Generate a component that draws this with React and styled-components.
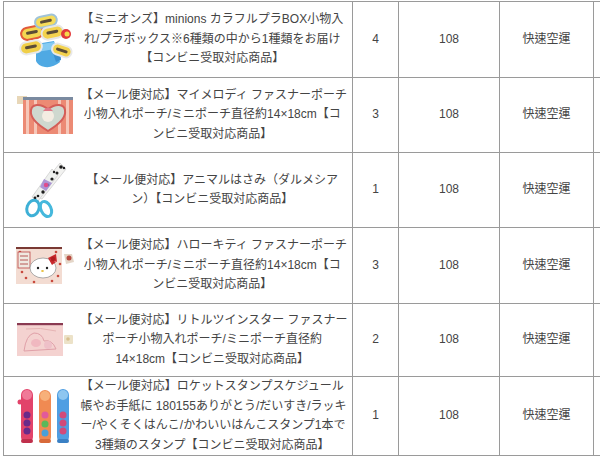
import React from 'react';
import styled, { createGlobalStyle } from 'styled-components';

const GlobalStyle = createGlobalStyle`
  html, body {
    margin: 0;
    padding: 0;
    background: #ffffff;
    overflow: hidden;
  }
`;

const Page = styled.div`
  width: 600px;
  height: 465px;
  overflow: hidden;
  padding: 1px 0 0 3px;
  box-sizing: border-box;
  background: #fff;
`;

const Table = styled.table`
  border-collapse: collapse;
  table-layout: fixed;
  width: 640px;
  font-family: "Liberation Sans", "Noto Sans CJK TC", "Noto Sans CJK JP", sans-serif;
  font-size: 12px;
  color: #444444;
`;

const Col = styled.col`
  width: ${props => props.$w}px;
`;

const Row = styled.tr`
  height: ${props => props.$h}px;
`;

const Cell = styled.td`
  border: 1px solid #9a9a9a;
  padding: 0;
  text-align: center;
  vertical-align: middle;
  line-height: 19.5px;
`;

const PicCell = styled(Cell)`
  border-right: none;
`;

const NameCell = styled(Cell)`
  border-left: none;
  padding: 0 8px 0 0;
`;

const Line = styled.div`
  white-space: nowrap;
`;

const Pic = styled.div`
  display: flex;
  align-items: center;
  justify-content: center;
  padding-left: 8px;
`;

const MinionsBox = () => (
  <svg width="60" height="56" viewBox="0 0 60 56">
    <path d="M20 32 L38 29 L44 50 Q37 56 29 55 Q22 54 20 49 Z" fill="#4fa9e3" />
    <path d="M20 33 L38 30 L39 37 L21 40 Z" fill="#86cbf2" />
    <path d="M36 38 L44 36 L45 48 L40 50 Z" fill="#3b8fcf" />
    <g transform="rotate(-12 30 24)">
      <rect x="6" y="12" width="22" height="12" rx="6" fill="#f3d652" stroke="#e25a3a" strokeWidth="2" />
      <rect x="22" y="4" width="22" height="11" rx="5.5" fill="#f6dc5a" stroke="#9fc3d8" strokeWidth="2" />
      <rect x="26" y="16" width="22" height="12" rx="6" fill="#f3d24e" stroke="#e6e6e6" strokeWidth="2" />
      <rect x="2" y="26" width="22" height="12" rx="6" fill="#f0cf48" stroke="#e9e9e9" strokeWidth="2" />
      <g fill="#5a4c36">
        <rect x="11" y="16" width="12" height="3" rx="1.5" />
        <rect x="27" y="8" width="12" height="3" rx="1.5" />
        <rect x="31" y="20" width="12" height="3" rx="1.5" />
        <rect x="7" y="30" width="12" height="3" rx="1.5" />
      </g>
    </g>
    <g transform="rotate(18 46 38)">
      <rect x="36" y="33" width="20" height="11" rx="5.5" fill="#f2d24e" stroke="#e8e8e8" strokeWidth="2" />
      <rect x="40" y="37" width="12" height="3" rx="1.5" fill="#5a4c36" />
    </g>
    <circle cx="50" cy="22" r="5" fill="#e2383a" />
    <circle cx="51" cy="22" r="2.5" fill="#f6d84a" />
  </svg>
);

const MelodyPouch = () => (
  <svg width="58" height="42" viewBox="0 0 58 42">
    <rect x="0" y="2" width="10" height="8" fill="#e8d7b8" />
    <rect x="6" y="4" width="50" height="36" fill="#ec8a74" />
    <g fill="#f6c7b8">
      <rect x="9" y="4" width="3" height="36" />
      <rect x="17" y="4" width="3" height="36" />
      <rect x="41" y="4" width="3" height="36" />
      <rect x="49" y="4" width="3" height="36" />
    </g>
    <rect x="6" y="3" width="50" height="3" fill="#7a8aa0" />
    <path d="M31 37 C18 29 13 23 14 16 C15 10 23 9 31 15 C39 9 47 10 48 16 C49 23 44 29 31 37 Z" fill="#cfd8cf" stroke="#d45e58" strokeWidth="2" />
    <circle cx="31" cy="22" r="6" fill="#f4ece2" />
    <path d="M26 17 Q31 10 36 17 Z" fill="#e07888" />
  </svg>
);

const DalmatianScissors = () => (
  <svg width="44" height="58" viewBox="0 0 44 58">
    <path d="M36 2 L42 8 L18 38 L10 34 Z" fill="#f2f2f0" stroke="#cfcfcf" strokeWidth="0.8" />
    <path d="M28 8 L34 14 L14 40 L8 36 Z" fill="#eef0ee" stroke="#cfcfcf" strokeWidth="0.8" />
    <g fill="#1e1e1e">
      <circle cx="37" cy="6" r="1.8" />
      <circle cx="33" cy="12" r="1.5" />
      <circle cx="28" cy="18" r="1.6" />
      <circle cx="24" cy="24" r="1.4" />
      <circle cx="19" cy="31" r="1.7" />
      <circle cx="14" cy="35" r="1.3" />
      <circle cx="30" cy="11" r="1.2" />
      <circle cx="11" cy="37" r="1.4" />
      <circle cx="40" cy="7" r="1.2" />
    </g>
    <path d="M20 18 L28 22 L22 30 L16 26 Z" fill="#9b7ed0" opacity="0.8" />
    <circle cx="22" cy="24" r="2.2" fill="#e04c8c" />
    <ellipse cx="9" cy="47" rx="6" ry="8" fill="none" stroke="#3eb0d6" strokeWidth="3" transform="rotate(20 9 47)" />
    <ellipse cx="22" cy="48" rx="5" ry="8" fill="none" stroke="#45b8dc" strokeWidth="3" transform="rotate(-25 22 48)" />
  </svg>
);

const KittyPouch = () => (
  <svg width="60" height="40" viewBox="0 0 60 40">
    <rect x="0" y="2" width="46" height="36" fill="#f3dcd2" />
    <g fill="#c84a3e">
      <circle cx="4" cy="6" r="1.3" /><circle cx="10" cy="32" r="1.3" /><circle cx="40" cy="6" r="1.3" />
      <circle cx="42" cy="30" r="1.3" /><circle cx="6" cy="26" r="1.3" /><circle cx="36" cy="35" r="1.3" />
      <circle cx="44" cy="18" r="1.3" /><circle cx="18" cy="36" r="1.3" />
    </g>
    <rect x="2" y="6" width="12" height="16" fill="#efe8e0" stroke="#b44" strokeWidth="0.8" />
    <g stroke="#a33" strokeWidth="0.8">
      <line x1="4" y1="10" x2="12" y2="10" /><line x1="4" y1="14" x2="12" y2="14" /><line x1="4" y1="18" x2="12" y2="18" />
    </g>
    <ellipse cx="27" cy="22" rx="13" ry="10" fill="#ffffff" stroke="#999" strokeWidth="0.8" />
    <circle cx="22" cy="22" r="1.2" fill="#222" />
    <circle cx="31" cy="22" r="1.2" fill="#222" />
    <ellipse cx="26.5" cy="25" rx="1.4" ry="1" fill="#e8c040" />
    <path d="M32 12 L40 8 L41 16 Z M32 12 L36 19 L40 16 Z" fill="#c8282c" />
    <circle cx="37" cy="13" r="2.2" fill="#b01e22" />
    <rect x="0" y="1" width="46" height="2" fill="#7a3a34" />
    <path d="M48 8 L56 8 L58 16 L50 18 Z" fill="#e4d6c8" />
    <circle cx="53" cy="12" r="2.5" fill="#b84a40" />
  </svg>
);

const StarsPouch = () => (
  <svg width="60" height="38" viewBox="0 0 60 38">
    <rect x="1" y="3" width="46" height="32" fill="#f4d2d0" />
    <rect x="1" y="2" width="46" height="2.2" fill="#8a3a52" />
    <path d="M8 30 Q10 14 18 12 Q26 12 28 20 Q36 18 40 28 Z" fill="none" stroke="#e0a0a8" strokeWidth="1" />
    <ellipse cx="20" cy="22" rx="5" ry="4" fill="#f0b8c0" />
    <ellipse cx="32" cy="24" rx="4" ry="4" fill="#eec0c8" />
    <path d="M10 8 Q24 6 40 10" fill="none" stroke="#e6b4b4" strokeWidth="1" />
    <rect x="48" y="14" width="9" height="9" rx="1" fill="#ece2c8" />
    <circle cx="52" cy="18" r="1.8" fill="#d8c090" />
  </svg>
);

const StampSticks = () => (
  <svg width="58" height="58" viewBox="0 0 58 58">
    <rect x="4" y="2" width="12" height="54" rx="6" fill="#e2436a" />
    <rect x="22" y="3" width="12" height="53" rx="6" fill="#f08a52" />
    <rect x="40" y="2" width="12" height="54" rx="6" fill="#4f9ee2" />
    <ellipse cx="10" cy="8" rx="5" ry="5" fill="#f07a98" />
    <ellipse cx="28" cy="9" rx="5" ry="5" fill="#f7b07a" />
    <ellipse cx="46" cy="8" rx="5" ry="5" fill="#8ec6f0" />
    <circle cx="3" cy="15" r="2.5" fill="#e2436a" />
    <g fill="#6a2a8a">
      <circle cx="10" cy="28" r="3.5" /><circle cx="10" cy="36" r="3.5" /><circle cx="10" cy="44" r="3.5" />
    </g>
    <circle cx="28" cy="28" r="3.5" fill="#e25a9a" />
    <circle cx="28" cy="37" r="3.5" fill="#5ab85a" />
    <circle cx="28" cy="46" r="3.5" fill="#4aa0d8" />
    <g fill="#d24a7a">
      <circle cx="46" cy="28" r="3.5" /><circle cx="46" cy="36" r="3.5" /><circle cx="46" cy="44" r="3.5" />
    </g>
    <rect x="4" y="52" width="12" height="4" rx="2" fill="#c0304c" />
    <rect x="22" y="52" width="12" height="4" rx="2" fill="#d86a3a" />
    <rect x="40" y="52" width="12" height="4" rx="2" fill="#3a80c4" />
  </svg>
);

const columns = [77, 272, 46, 101, 94, 50];

const items = [
  {
    h: 76, pic: <MinionsBox />, qty: 4,
    lines: ['【ミニオンズ】minions カラフルプラBOX小物入', 'れ/プラボックス※6種類の中から1種類をお届け', '【コンビニ受取対応商品】'],
  },
  {
    h: 75, pic: <MelodyPouch />, qty: 3,
    lines: ['【メール便対応】マイメロディ ファスナーポーチ', '小物入れポーチ/ミニポーチ直径約14×18cm【コ', 'ンビニ受取対応商品】'],
  },
  {
    h: 75, pic: <DalmatianScissors />, qty: 1,
    lines: ['【メール便対応】アニマルはさみ（ダルメシア', 'ン）【コンビニ受取対応商品】'],
  },
  {
    h: 76, pic: <KittyPouch />, qty: 3,
    lines: ['【メール便対応】ハローキティ ファスナーポーチ', '小物入れポーチ/ミニポーチ直径約14×18cm【コ', 'ンビニ受取対応商品】'],
  },
  {
    h: 73, pic: <StarsPouch />, qty: 2,
    lines: ['【メール便対応】リトルツインスター ファスナー', 'ポーチ小物入れポーチ/ミニポーチ直径約', '14×18cm【コンビニ受取対応商品】'],
  },
  {
    h: 77, pic: <StampSticks />, qty: 1,
    lines: ['【メール便対応】ロケットスタンプスケジュール', '帳やお手紙に 180155ありがとう/だいすき/ラッキ', 'ー/やくそくはんこ/かわいいはんこスタンプ1本で', '3種類のスタンプ【コンビニ受取対応商品】'],
  },
];

const App = () => (
  <Page>
    <GlobalStyle />
    <Table>
      <colgroup>
        {columns.map((w, i) => <Col key={i} $w={w} />)}
      </colgroup>
      <tbody>
        {items.map((item, i) => (
          <Row key={i} $h={item.h}>
            <PicCell><Pic>{item.pic}</Pic></PicCell>
            <NameCell>
              {item.lines.map((l, j) => <Line key={j}>{l}</Line>)}
            </NameCell>
            <Cell>{item.qty}</Cell>
            <Cell>108</Cell>
            <Cell>快速空運</Cell>
            <Cell />
          </Row>
        ))}
      </tbody>
    </Table>
  </Page>
);

export default App;
